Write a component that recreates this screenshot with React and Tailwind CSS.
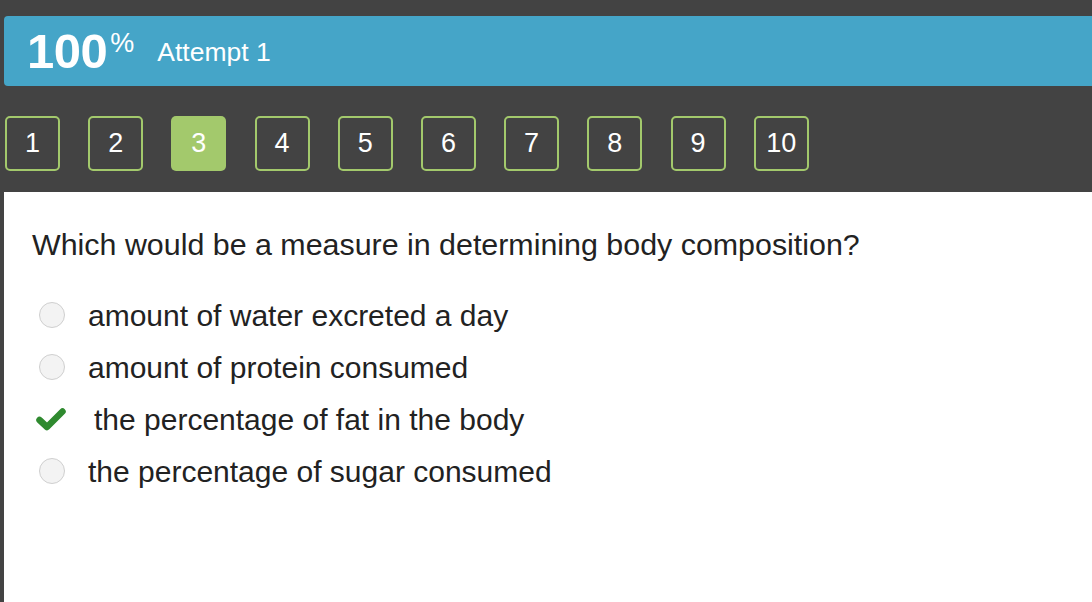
import React from 'react';

const questions = [1, 2, 3, 4, 5, 6, 7, 8, 9, 10];

const options = [
  { text: 'amount of water excreted a day', checked: false },
  { text: 'amount of protein consumed', checked: false },
  { text: 'the percentage of fat in the body', checked: true },
  { text: 'the percentage of sugar consumed', checked: false },
];

function CheckMark() {
  return (
    <svg width="30" height="26" viewBox="0 0 30 26" className="shrink-0">
      <path
        d="M3.5 14 L11 21 L26.5 5.5"
        fill="none"
        stroke="#2f8a2f"
        strokeWidth="6.5"
        strokeLinecap="round"
        strokeLinejoin="round"
      />
    </svg>
  );
}

export default function App() {
  return (
    <div
      className="w-[1092px] h-[602px] bg-[#434343] overflow-hidden flex flex-col"
      style={{ fontFamily: '"Liberation Sans", Arial, sans-serif' }}
    >
      {/* Score header */}
      <div className="pt-[16px] pl-[4px]">
        <div className="h-[70px] bg-[#45a5c8] rounded-l-[4px] flex items-center pl-[23px] text-white">
          <span className="text-[49px] font-bold tracking-[-0.5px] leading-none">100</span>
          <span className="text-[27px] leading-none self-start mt-[14px] ml-[3px]">%</span>
          <span className="text-[26.5px] ml-[23px] leading-none mt-[2px]">Attempt 1</span>
        </div>
      </div>

      {/* Question navigation */}
      <div className="flex gap-[28.2px] pl-[5px] pt-[30px] pb-[21px]">
        {questions.map((n) => (
          <div
            key={n}
            className={
              n === 3
                ? 'w-[55px] h-[55px] rounded-[5px] bg-[#a3c96c] flex items-center justify-center text-white text-[27px]'
                : 'w-[55px] h-[55px] rounded-[5px] border-2 border-[#a3c96c] flex items-center justify-center text-white text-[27px]'
            }
          >
            {n}
          </div>
        ))}
      </div>

      {/* Question body */}
      <div className="flex-1 ml-[4px] bg-white pl-[28px] pt-[32px]">
        <p className="text-[30.4px] text-[#222] leading-[40px]">Which would be a measure in determining body composition?</p>
        <div className="mt-[34px] flex flex-col gap-[18px]">
          {options.map((o) => (
            <div key={o.text} className="flex items-center h-[34px]">
              {o.checked ? (
                <div className="w-[56px] flex items-center pl-[4px]">
                  <CheckMark />
                </div>
              ) : (
                <div className="w-[56px] flex items-center pl-[7px]">
                  <div className="w-[26px] h-[26px] rounded-full border border-[#cfcfcf] bg-[#f3f3f3]" />
                </div>
              )}
              <span className={o.checked ? 'text-[30px] text-[#222] ml-[6px]' : 'text-[30px] text-[#222]'}>
                {o.text}
              </span>
            </div>
          ))}
        </div>
      </div>
    </div>
  );
}
